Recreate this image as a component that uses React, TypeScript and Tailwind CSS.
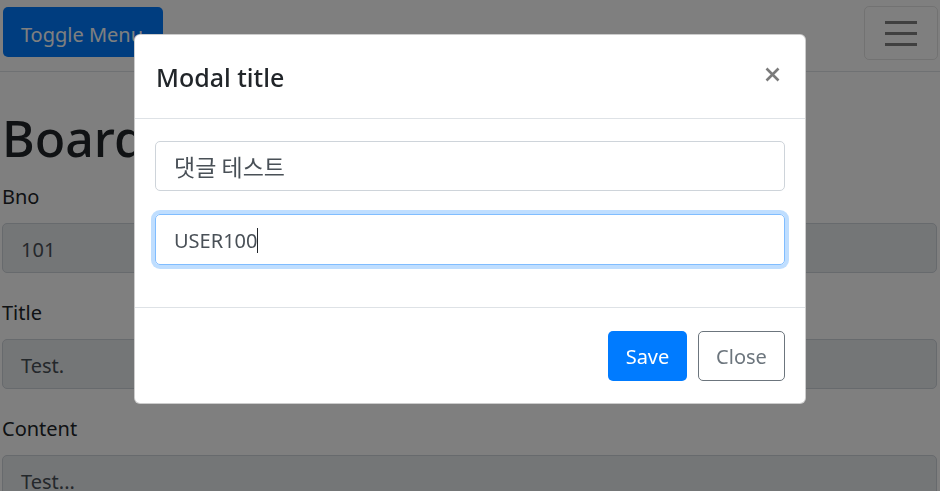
export default function App() {
    return (
        <div className="relative w-[940px] h-[491px] overflow-hidden bg-white font-['Noto_Sans','Noto_Sans_CJK_KR',sans-serif] text-[#212529]">
            {/* page behind the modal */}
            <nav className="h-[72px] border-b border-[#dee2e6] flex items-start justify-between pl-[3px] pr-[2px]">
                <button className="mt-[7px] w-[160px] h-[50px] rounded-[5px] bg-[#007bff] text-white text-[20px] leading-[30px] pt-[5px] pr-[2px]">
                    Toggle Menu
                </button>
                <button className="mt-[6px] w-[74px] h-[54px] rounded-[5px] border border-[rgba(0,0,0,0.1)] flex flex-col items-center justify-center gap-[8px]">
                    <span className="block w-[32px] h-[3px] bg-[#808080]"></span>
                    <span className="block w-[32px] h-[3px] bg-[#808080]"></span>
                    <span className="block w-[32px] h-[3px] bg-[#808080]"></span>
                </button>
            </nav>

            <div className="pl-[2px] pr-[3px]">
                <h1 className="mt-[36px] mb-[14px] text-[50px] leading-[60px] font-medium">Board Read Page</h1>

                <div className="mb-[25px]">
                    <label className="block text-[20px] leading-[30px] mb-[11px]">Bno</label>
                    <div className="h-[50px] rounded-[5px] border border-[#ced4da] bg-[#e9ecef] pl-[18px] pt-[2px] text-[20px] leading-[48px] text-[#495057]">101</div>
                </div>
                <div className="mb-[25px]">
                    <label className="block text-[20px] leading-[30px] mb-[11px]">Title</label>
                    <div className="h-[50px] rounded-[5px] border border-[#ced4da] bg-[#e9ecef] pl-[18px] pt-[2px] text-[20px] leading-[48px] text-[#495057]">Test.</div>
                </div>
                <div className="mb-[25px]">
                    <label className="block text-[20px] leading-[30px] mb-[11px]">Content</label>
                    <div className="h-[100px] rounded-[5px] border border-[#ced4da] bg-[#e9ecef] pl-[18px] pt-[11px] text-[20px] leading-[30px] text-[#495057]">Test...</div>
                </div>
            </div>

            {/* backdrop + modal */}
            <div className="fixed inset-0 bg-[rgba(0,0,0,0.5)]">
                <div className="mx-auto mt-[34px] w-[672px] h-[370px] bg-white border border-[rgba(0,0,0,0.2)] rounded-[6px] flex flex-col">
                    <div className="h-[84px] border-b border-[#dee2e6] flex items-center justify-between px-[21px] shrink-0">
                        <h5 className="text-[25px] leading-[36px] font-medium text-[#212529]">Modal title</h5>
                        <button className="w-[20px] h-[20px] flex items-center justify-center mr-[2px] mt-[-4px]">
                            <svg width="15" height="15" viewBox="0 0 15 15">
                                <path d="M1.5 1.5 L13.5 13.5 M13.5 1.5 L1.5 13.5" stroke="#7b7b7b" strokeWidth="2.6" />
                            </svg>
                        </button>
                    </div>

                    <div className="px-[20px] pt-[22px] h-[189px] border-b border-[#dee2e6] shrink-0">
                        <div className="h-[50px] rounded-[5px] border border-[#ced4da] pl-[18px] text-[23px] leading-[48px] text-[#495057] font-['Noto_Sans_CJK_KR',sans-serif]">
                            댓글 테스트
                        </div>
                        <div className="mt-[23px] h-[51px] rounded-[5px] border border-[#80bdff] shadow-[0_0_0_4px_rgba(0,123,255,0.25)] pl-[18px] pt-[1px] text-[20px] leading-[49px] text-[#495057] flex items-center">
                            <span>USER100</span>
                            <span className="inline-block w-[1px] h-[25px] bg-[#212529]"></span>
                        </div>
                    </div>

                    <div className="flex-1 flex items-center justify-end gap-[11px] px-[20px]">
                        <button className="w-[79px] h-[50px] rounded-[5px] bg-[#007bff] text-white text-[20px] pt-[3px]">Save</button>
                        <button className="w-[87px] h-[50px] rounded-[5px] border border-[#6c757d] text-[#6c757d] text-[20px] pt-[3px]">Close</button>
                    </div>
                </div>
            </div>
        </div>
    );
}
